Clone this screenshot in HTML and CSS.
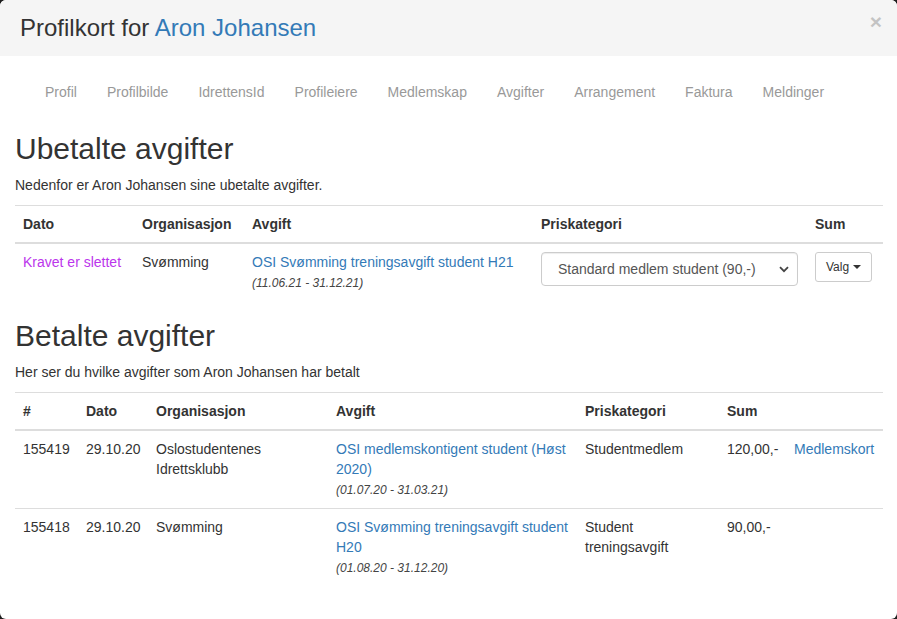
FILE: index.html
```html
<!DOCTYPE html>
<html lang="no">
<head>
<meta charset="utf-8">
<title>Profilkort</title>
<link rel="stylesheet" href="styles.css">
</head>
<body>
<div class="modal">
  <div class="modal-header">
    <h4 class="modal-title">Profilkort for <a href="#">Aron Johansen</a></h4>
    <button class="close" type="button">×</button>
  </div>
  <div class="modal-body">
    <ul class="nav">
      <li><a href="#">Profil</a></li>
      <li><a href="#">Profilbilde</a></li>
      <li><a href="#">IdrettensId</a></li>
      <li><a href="#">Profileiere</a></li>
      <li><a href="#">Medlemskap</a></li>
      <li><a href="#">Avgifter</a></li>
      <li><a href="#">Arrangement</a></li>
      <li><a href="#">Faktura</a></li>
      <li><a href="#">Meldinger</a></li>
    </ul>

    <h2>Ubetalte avgifter</h2>
    <p>Nedenfor er Aron Johansen sine ubetalte avgifter.</p>
    <table class="table t1">
      <colgroup>
        <col class="c-a"><col class="c-b"><col class="c-c"><col class="c-d"><col class="c-e">
      </colgroup>
      <thead>
        <tr><th>Dato</th><th>Organisasjon</th><th>Avgift</th><th>Priskategori</th><th>Sum</th></tr>
      </thead>
      <tbody>
        <tr>
          <td><a href="#" class="deleted">Kravet er slettet</a></td>
          <td>Svømming</td>
          <td><a href="#">OSI Svømming treningsavgift student H21</a><br><small class="period">(11.06.21 - 31.12.21)</small></td>
          <td>
            <div class="select">
              <span>Standard medlem student (90,-)</span>
              <svg class="chev" width="10" height="7" viewBox="0 0 10 7"><path d="M1 1.2 L5 5.2 L9 1.2" fill="none" stroke="#444" stroke-width="1.8"/></svg>
            </div>
          </td>
          <td><button class="btn" type="button">Valg <span class="caret"></span></button></td>
        </tr>
      </tbody>
    </table>

    <h2 class="h-after">Betalte avgifter</h2>
    <p>Her ser du hvilke avgifter som Aron Johansen har betalt</p>
    <table class="table t2">
      <colgroup>
        <col class="d-a"><col class="d-b"><col class="d-c"><col class="d-d"><col class="d-e"><col class="d-f"><col class="d-g">
      </colgroup>
      <thead>
        <tr><th>#</th><th>Dato</th><th>Organisasjon</th><th>Avgift</th><th>Priskategori</th><th>Sum</th><th></th></tr>
      </thead>
      <tbody>
        <tr>
          <td>155419</td>
          <td>29.10.20</td>
          <td>Oslostudentenes Idrettsklubb</td>
          <td><a href="#">OSI medlemskontigent student (Høst 2020)</a><br><small class="period">(01.07.20 - 31.03.21)</small></td>
          <td>Studentmedlem</td>
          <td>120,00,-</td>
          <td><a href="#">Medlemskort</a></td>
        </tr>
        <tr>
          <td>155418</td>
          <td>29.10.20</td>
          <td>Svømming</td>
          <td><a href="#">OSI Svømming treningsavgift student H20</a><br><small class="period">(01.08.20 - 31.12.20)</small></td>
          <td>Student treningsavgift</td>
          <td>90,00,-</td>
          <td></td>
        </tr>
      </tbody>
    </table>
  </div>
</div>
</body>
</html>
```

FILE: styles.css
```css
* { box-sizing: border-box; }
html, body { margin: 0; padding: 0; }
body {
  background: #1e1e1e;
  font-family: "Liberation Sans", Arial, Helvetica, sans-serif;
  font-size: 14px;
  line-height: 20px;
  color: #333;
  height: 619px;
  overflow: hidden;
}
a { color: #337ab7; text-decoration: none; }

.modal {
  background: #fff;
  border-radius: 6px;
  overflow: hidden;
  width: 100%;
}
.modal-header {
  background: #f5f5f5;
  height: 56px;
  padding: 0 20px;
  display: flex;
  align-items: center;
  justify-content: space-between;
}
.modal-title {
  margin: 0;
  font-size: 24px;
  font-weight: normal;
  line-height: 28px;
  color: #333;
}
.close {
  align-self: flex-start;
  margin: 11px -5px 0 0;
  border: 0;
  background: none;
  padding: 0;
  font-family: "Liberation Sans", Arial, sans-serif;
  font-size: 21px;
  font-weight: bold;
  line-height: 21px;
  color: #000;
  opacity: .2;
}

.modal-body { padding: 16px 15px 15px; }

.nav {
  list-style: none;
  margin: 0;
  padding: 0 0 0 15px;
  display: flex;
}
.nav a {
  display: block;
  padding: 10px 15px;
  color: #999;
}

h2 {
  font-size: 30px;
  font-weight: normal;
  line-height: 33px;
  margin: 20px 0 10px;
  color: #333;
}
h2.h-after { margin-top: 18px; }
p { margin: 0 0 10px; }

.table {
  width: 100%;
  border-collapse: collapse;
  table-layout: fixed;
  margin-bottom: 0;
}
.table.t2 { margin-bottom: 18px; }
.table th, .table td {
  padding: 8px;
  text-align: left;
  vertical-align: top;
  border-top: 1px solid #ddd;
}
.table th {
  font-weight: bold;
  border-bottom: 2px solid #ddd;
}

.c-a { width: 119px; }
.c-b { width: 110px; }
.c-c { width: 289px; }
.c-d { width: 274px; }
.c-e { width: 76px; }

.d-a { width: 63px; }
.d-b { width: 70px; }
.d-c { width: 180px; }
.d-d { width: 249px; }
.d-e { width: 142px; }
.d-f { width: 67px; }
.d-g { width: 97px; }

.deleted { color: #bb35ec; }
.period {
  font-size: 12px;
  font-style: italic;
  color: #444;
}

.select {
  display: flex;
  align-items: center;
  justify-content: space-between;
  height: 34px;
  width: 257px;
  border: 1px solid #ccc;
  border-radius: 4px;
  padding: 0 8px 0 16px;
  color: #555;
  background: #fff;
  box-shadow: inset 0 1px 1px rgba(0,0,0,.075);
}
.chev { display: block; }

.btn {
  font-family: "Liberation Sans", Arial, sans-serif;
  font-size: 12px;
  line-height: 18px;
  height: 30px;
  padding: 5px 10px;
  color: #333;
  background: #fff;
  border: 1px solid #ccc;
  border-radius: 3px;
  display: inline-flex;
  align-items: center;
  gap: 4px;
}
.caret {
  display: inline-block;
  width: 0;
  height: 0;
  border-top: 4px solid #333;
  border-left: 4px solid transparent;
  border-right: 4px solid transparent;
}
```
